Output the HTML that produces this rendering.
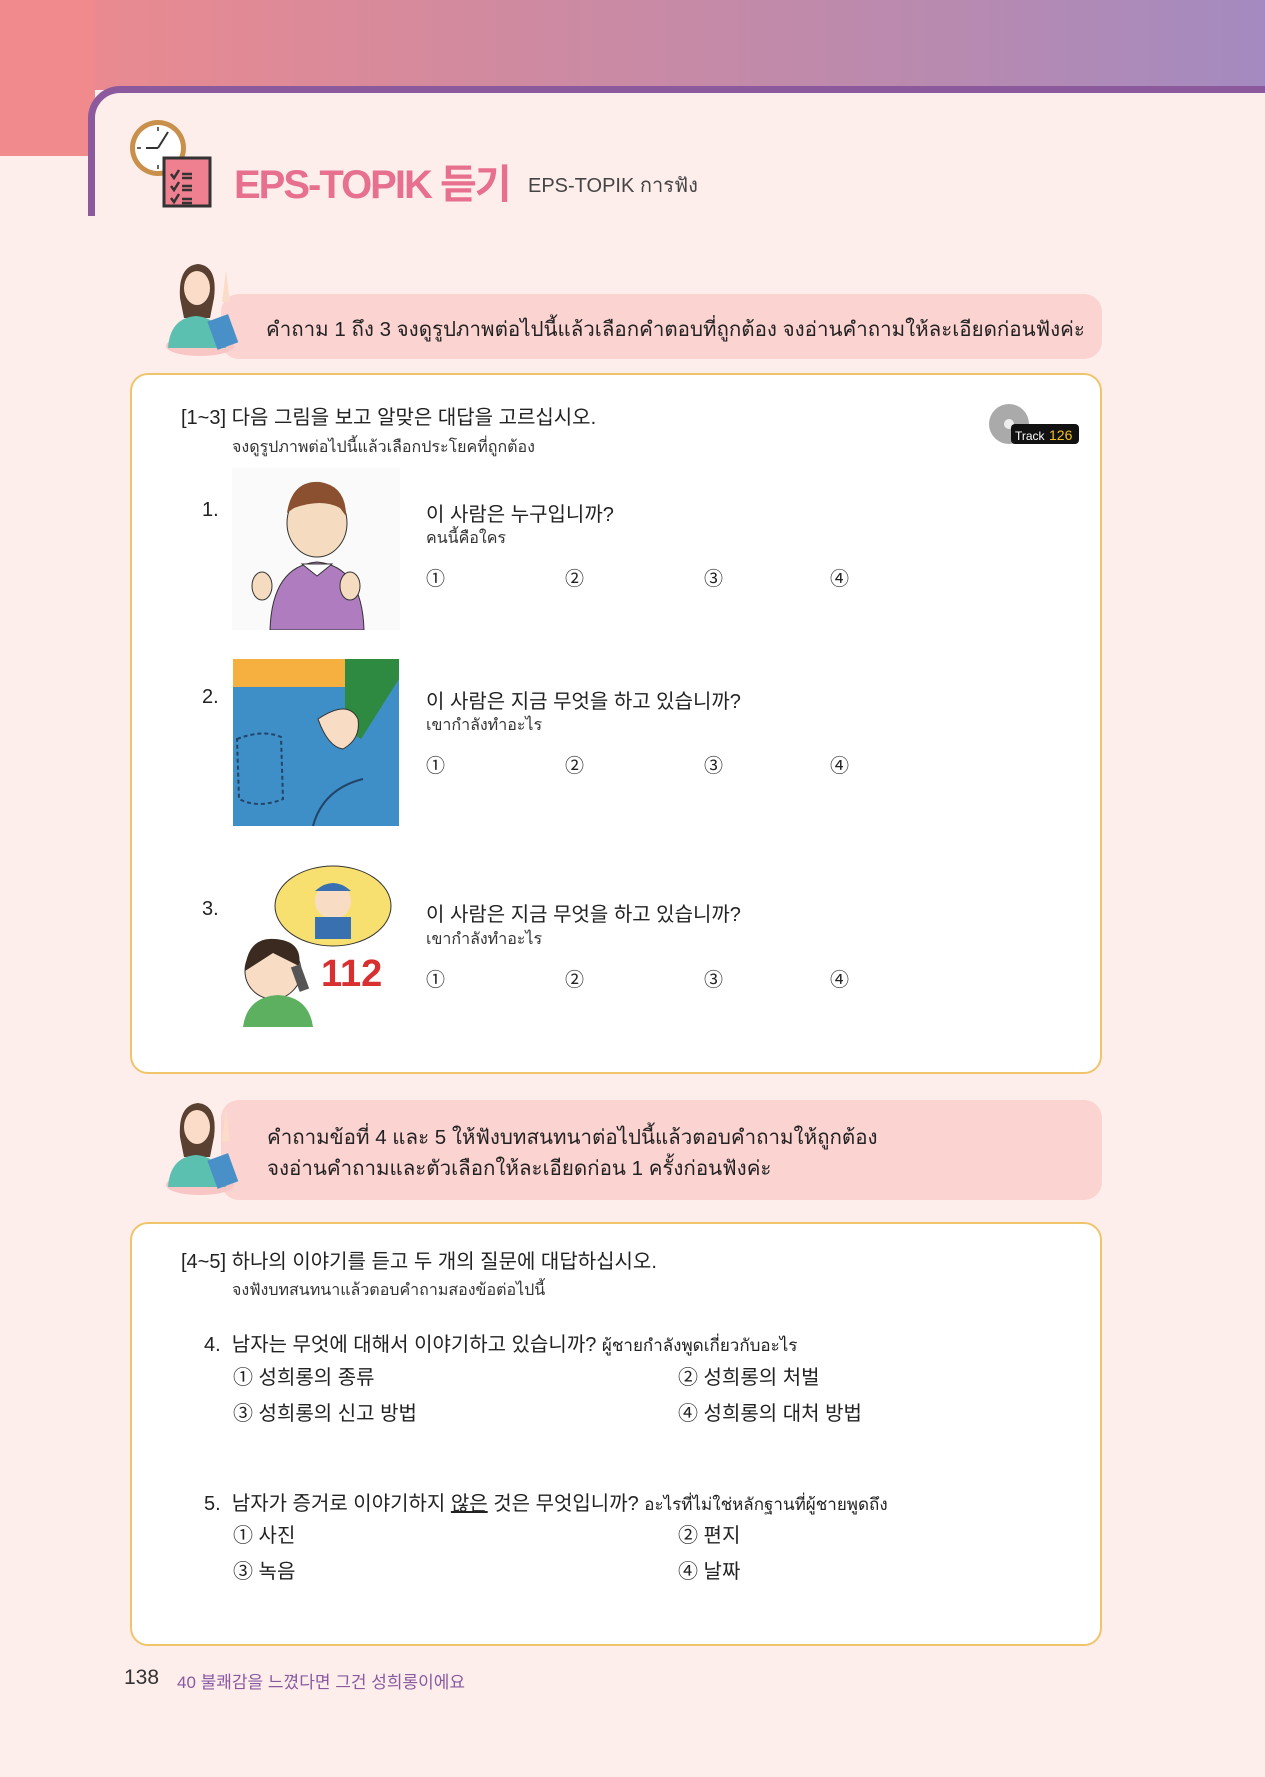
<!DOCTYPE html>
<html><head><meta charset="utf-8"><style>
*{margin:0;padding:0;box-sizing:border-box}
body{width:1265px;height:1777px;background:#fdeeec;position:relative;overflow:hidden;font-family:"Liberation Sans","Noto Sans CJK KR",sans-serif;color:#222}
.a{position:absolute;white-space:nowrap}
.kr{font-size:20px}
.th{font-size:16px;color:#333}
.box{position:absolute;left:130px;width:972px;background:#fff;border:2px solid #f0c46a;border-radius:18px}
.ban{position:absolute;left:221px;width:881px;background:#fbd3d1;border-radius:18px}
.opt{font-size:19px}
</style></head><body>
<div class="a" style="left:0;top:0;width:1265px;height:90px;background:linear-gradient(90deg,#f08a8c,#d08aa0 40%,#b88ab0 75%,#a48ac0)"></div>
<div class="a" style="left:0;top:0;width:95px;height:156px;background:#f08a8c"></div>
<div class="a" style="left:88px;top:86px;width:1200px;height:130px;border-top:7px solid #8c5a9c;border-left:7px solid #8c5a9c;border-top-left-radius:32px;background:#fdeeec"></div>
<div class="a" style="left:88px;top:180px;width:7px;height:30px;background:#8c5a9c;border-radius:0 0 4px 4px"></div>
<!-- icon -->
<svg class="a" style="left:128px;top:116px" width="86" height="92" viewBox="0 0 86 92">
<circle cx="30" cy="32" r="28" fill="#c8904a"/><circle cx="30" cy="32" r="23" fill="#fff"/>
<g stroke="#333" stroke-width="1.5"><line x1="30" y1="11" x2="30" y2="15"/><line x1="9" y1="32" x2="13" y2="32"/><line x1="30" y1="49" x2="30" y2="53"/></g>
<line x1="30" y1="32" x2="40" y2="16" stroke="#333" stroke-width="2"/><line x1="30" y1="32" x2="18" y2="32" stroke="#333" stroke-width="2"/>
<rect x="36" y="42" width="46" height="48" fill="#ef8090" stroke="#333" stroke-width="3"/>
<g stroke="#333" stroke-width="2.5" fill="none">
<path d="M43 58 l3 4 l5 -8 M54 58 h10 M54 62 h10"/>
<path d="M43 70 l3 4 l5 -8 M54 70 h10 M54 74 h10"/>
<path d="M43 82 l3 4 l5 -8 M54 83 h10 M54 87 h10"/>
</g>
</svg>
<div class="a" style="left:234px;top:152px;font-size:40px;font-weight:bold;color:#e8708f;letter-spacing:-2px">EPS-TOPIK 듣기</div>
<div class="a" style="left:528px;top:169px;font-size:20px;color:#444">EPS-TOPIK การฟัง</div>

<!-- banner 1 -->
<div class="ban" style="top:294px;height:65px"></div>
<svg class="a" style="left:160px;top:258px" width="92" height="100" viewBox="0 0 92 100">
<ellipse cx="40" cy="88" rx="34" ry="10" fill="#f8c6c4"/>
<path d="M20 40 Q18 8 38 6 Q58 8 54 40 L50 60 L24 60Z" fill="#5a4030"/>
<ellipse cx="37" cy="30" rx="13" ry="17" fill="#fadcc8"/>
<path d="M8 90 Q10 60 36 58 Q62 60 66 90Z" fill="#5cc0b0"/>
<rect x="52" y="60" width="22" height="30" fill="#4a90c8" transform="rotate(-20 60 75)"/>
<path d="M62 44 L66 12 L70 44Z" fill="#fadcc8"/>
</svg>
<div class="a" style="left:266px;top:313px;font-size:20.5px">คำถาม 1 ถึง 3 จงดูรูปภาพต่อไปนี้แล้วเลือกคำตอบที่ถูกต้อง จงอ่านคำถามให้ละเอียดก่อนฟังค่ะ</div>

<!-- box 1 -->
<div class="box" style="top:373px;height:701px"></div>
<div class="a kr" style="left:181px;top:401px">[1~3] 다음 그림을 보고 알맞은 대답을 고르십시오.</div>
<div class="a th" style="left:232px;top:435px">จงดูรูปภาพต่อไปนี้แล้วเลือกประโยคที่ถูกต้อง</div>
<svg class="a" style="left:987px;top:402px" width="94" height="44" viewBox="0 0 94 44">
<circle cx="22" cy="22" r="20" fill="#aaa"/><circle cx="22" cy="22" r="5" fill="#eee"/>
<rect x="24" y="22" width="68" height="20" rx="4" fill="#111"/>
<text x="28" y="38" font-size="12" fill="#fff" font-family="Liberation Sans">Track</text><text x="62" y="38" font-size="14" fill="#f4c020" font-family="Liberation Sans">126</text>
</svg>

<div class="a kr" style="left:202px;top:499px">1.</div>
<svg class="a" style="left:232px;top:468px" width="168" height="162" viewBox="0 0 168 162">
<rect width="168" height="162" fill="#fafafa"/>
<ellipse cx="85" cy="55" rx="30" ry="34" fill="#f5dcc0" stroke="#333"/>
<path d="M55 45 Q60 12 88 14 Q114 18 114 48 L108 40 Q90 30 62 40Z" fill="#8a5030"/>
<path d="M38 162 Q40 98 85 94 Q130 98 132 162Z" fill="#b07cc0" stroke="#333"/>
<path d="M70 96 L85 108 L100 96Z" fill="#fff" stroke="#333"/>
<ellipse cx="30" cy="118" rx="10" ry="14" fill="#f5dcc0" stroke="#333"/>
<ellipse cx="118" cy="118" rx="10" ry="14" fill="#f5dcc0" stroke="#333"/>
</svg>
<div class="a kr" style="left:426px;top:498px">이 사람은 누구입니까?</div>
<div class="a th" style="left:426px;top:526px">คนนี้คือใคร</div>
<div class="a opt" style="left:426px;top:564px">①</div><div class="a opt" style="left:565px;top:564px">②</div><div class="a opt" style="left:704px;top:564px">③</div><div class="a opt" style="left:830px;top:564px">④</div>

<div class="a kr" style="left:202px;top:686px">2.</div>
<svg class="a" style="left:233px;top:659px" width="166" height="167" viewBox="0 0 166 167">
<rect width="166" height="167" fill="#3e8ec8"/>
<rect width="120" height="28" fill="#f6b040"/>
<path d="M112 0 L166 0 L166 20 L128 80 L112 70Z" fill="#2e8a40"/>
<path d="M85 60 Q115 40 125 60 Q128 80 110 90 Q95 88 85 60Z" fill="#f8dcc4" stroke="#333"/>
<path d="M4 80 Q30 70 48 78 L50 140 Q25 150 6 140Z" fill="none" stroke="#246" stroke-width="2" stroke-dasharray="4 3"/>
<path d="M80 167 Q90 130 130 120" fill="none" stroke="#246" stroke-width="2"/>
</svg>
<div class="a kr" style="left:426px;top:685px">이 사람은 지금 무엇을 하고 있습니까?</div>
<div class="a th" style="left:426px;top:713px">เขากำลังทำอะไร</div>
<div class="a opt" style="left:426px;top:751px">①</div><div class="a opt" style="left:565px;top:751px">②</div><div class="a opt" style="left:704px;top:751px">③</div><div class="a opt" style="left:830px;top:751px">④</div>

<div class="a kr" style="left:202px;top:898px">3.</div>
<svg class="a" style="left:233px;top:861px" width="166" height="166" viewBox="0 0 166 166">
<rect width="166" height="166" fill="#fff"/>
<ellipse cx="100" cy="45" rx="58" ry="40" fill="#f8e070" stroke="#333"/>
<circle cx="100" cy="40" r="18" fill="#f8dcc4"/><rect x="82" y="56" width="36" height="22" fill="#3870b0"/>
<path d="M82 30 Q100 14 118 30Z" fill="#3870b0"/>
<circle cx="40" cy="110" r="28" fill="#f8dcc4" stroke="#333"/>
<path d="M12 110 Q14 76 42 78 Q70 80 66 105 L40 92Z" fill="#3a2a20"/>
<path d="M10 166 Q14 136 45 134 Q76 136 80 166Z" fill="#5cb060"/>
<rect x="62" y="104" width="10" height="26" fill="#555" transform="rotate(-20 67 117)"/>
<text x="88" y="125" font-size="38" font-weight="bold" fill="#d83030" font-family="Liberation Sans">112</text>
</svg>
<div class="a kr" style="left:426px;top:898px">이 사람은 지금 무엇을 하고 있습니까?</div>
<div class="a th" style="left:426px;top:927px">เขากำลังทำอะไร</div>
<div class="a opt" style="left:426px;top:965px">①</div><div class="a opt" style="left:565px;top:965px">②</div><div class="a opt" style="left:704px;top:965px">③</div><div class="a opt" style="left:830px;top:965px">④</div>

<!-- banner 2 -->
<div class="ban" style="top:1100px;height:100px"></div>
<svg class="a" style="left:160px;top:1097px" width="92" height="100" viewBox="0 0 92 100">
<ellipse cx="40" cy="88" rx="34" ry="10" fill="#f8c6c4"/>
<path d="M20 40 Q18 8 38 6 Q58 8 54 40 L50 60 L24 60Z" fill="#5a4030"/>
<ellipse cx="37" cy="30" rx="13" ry="17" fill="#fadcc8"/>
<path d="M8 90 Q10 60 36 58 Q62 60 66 90Z" fill="#5cc0b0"/>
<rect x="52" y="60" width="22" height="30" fill="#4a90c8" transform="rotate(-20 60 75)"/>
<path d="M62 44 L66 12 L70 44Z" fill="#fadcc8"/>
</svg>
<div class="a" style="left:267px;top:1121px;font-size:20.5px">คำถามข้อที่ 4 และ 5 ให้ฟังบทสนทนาต่อไปนี้แล้วตอบคำถามให้ถูกต้อง</div>
<div class="a" style="left:267px;top:1152px;font-size:20.5px">จงอ่านคำถามและตัวเลือกให้ละเอียดก่อน 1 ครั้งก่อนฟังค่ะ</div>

<!-- box 2 -->
<div class="box" style="top:1222px;height:424px"></div>
<div class="a kr" style="left:181px;top:1245px">[4~5] 하나의 이야기를 듣고 두 개의 질문에 대답하십시오.</div>
<div class="a th" style="left:232px;top:1278px">จงฟังบทสนทนาแล้วตอบคำถามสองข้อต่อไปนี้</div>
<div class="a kr" style="left:204px;top:1328px">4. &nbsp;남자는 무엇에 대해서 이야기하고 있습니까? <span style="font-size:17px">ผู้ชายกำลังพูดเกี่ยวกับอะไร</span></div>
<div class="a kr" style="left:233px;top:1361px">① 성희롱의 종류</div><div class="a kr" style="left:678px;top:1361px">② 성희롱의 처벌</div>
<div class="a kr" style="left:233px;top:1397px">③ 성희롱의 신고 방법</div><div class="a kr" style="left:678px;top:1397px">④ 성희롱의 대처 방법</div>
<div class="a kr" style="left:204px;top:1487px">5. &nbsp;남자가 증거로 이야기하지 <u>않은</u> 것은 무엇입니까? <span style="font-size:17px">อะไรที่ไม่ใช่หลักฐานที่ผู้ชายพูดถึง</span></div>
<div class="a kr" style="left:233px;top:1519px">① 사진</div><div class="a kr" style="left:678px;top:1519px">② 편지</div>
<div class="a kr" style="left:233px;top:1555px">③ 녹음</div><div class="a kr" style="left:678px;top:1555px">④ 날짜</div>

<div class="a" style="left:124px;top:1666px;font-size:21px;color:#333">138</div>
<div class="a" style="left:177px;top:1668px;font-size:17px;color:#8a5aa0">40 불쾌감을 느꼈다면 그건 성희롱이에요</div>
</body></html>
